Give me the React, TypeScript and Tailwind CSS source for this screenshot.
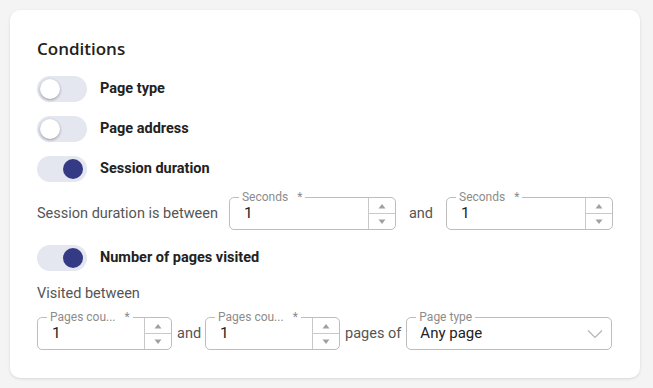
import React from 'react';

const Toggle = ({ on, label }: { on: boolean; label: string }) => (
  <div className="flex items-center h-[26px]">
    <div className="relative w-[50px] h-[26px] rounded-full bg-[#e4e6f0]">
      <div
        className={`absolute top-[3px] w-[20px] h-[20px] rounded-full ${
          on ? 'left-[26px] bg-[#353a85]' : 'left-[3px] bg-white shadow-[0_1px_3px_rgba(0,0,0,0.35)]'
        }`}
      />
    </div>
    <span className="ml-[13px] text-[14.5px] font-bold text-[#222]">{label}</span>
  </div>
);

const Stepper = () => (
  <div className="flex flex-col w-[27px] h-full border-l border-[#c9c9c9]">
    <div className="flex-1 flex items-center justify-center border-b border-[#c9c9c9]">
      <svg width="8" height="6" viewBox="0 0 8 6"><path d="M4 1L7.5 5.5H0.5Z" fill="#a0a0a0" /></svg>
    </div>
    <div className="flex-1 flex items-center justify-center">
      <svg width="8" height="6" viewBox="0 0 8 6"><path d="M4 5L7.5 0.5H0.5Z" fill="#a0a0a0" /></svg>
    </div>
  </div>
);

const NumberField = ({ label, width }: { label: string; width: string }) => (
  <div className={`relative shrink-0 h-[33px] ${width} flex items-stretch border border-[#bdbdbd] rounded-[5px]`}>
    <span className="absolute -top-[9px] left-[9px] bg-white px-[3px] text-[12px] leading-[16px] text-[#8c8c8c] whitespace-nowrap">
      {label}
      <span className="ml-[9px]">*</span>
    </span>
    <div className="flex-1 flex items-center pl-[14px] text-[15.5px] text-[#222]">1</div>
    <Stepper />
  </div>
);

export default function App() {
  return (
    <div className="min-h-[388px] bg-[#f4f4f5] p-[10px] font-['Roboto',sans-serif]">
      <div className="w-[630px] bg-white rounded-[10px] shadow-[0_1px_3px_rgba(0,0,0,0.12)] px-[27px] pt-[27px] pb-[28px]">
        <h2 className="text-[17px] leading-[24px] font-semibold text-[#222] font-['Open_Sans',sans-serif]">Conditions</h2>
        <div className="mt-[15px] flex flex-col gap-[14px]">
          <Toggle on={false} label="Page type" />
          <Toggle on={false} label="Page address" />
          <Toggle on={true} label="Session duration" />
        </div>
        <div className="mt-[15px] flex items-center whitespace-nowrap">
          <span className="text-[14.5px] text-[#555] w-[193px]">Session duration is between</span>
          <NumberField label="Seconds" width="w-[167px]" />
          <span className="text-[14.5px] text-[#555] mx-[13px]">and</span>
          <NumberField label="Seconds" width="w-[167px]" />
        </div>
        <div className="mt-[15px]">
          <Toggle on={true} label="Number of pages visited" />
        </div>
        <div className="mt-[13px] text-[14.5px] leading-[20px] text-[#555]">Visited between</div>
        <div className="mt-[13px] flex items-center whitespace-nowrap">
          <NumberField label="Pages cou..." width="w-[135px]" />
          <span className="text-[14.5px] text-[#555] ml-[5px] mr-[4px]">and</span>
          <NumberField label="Pages cou..." width="w-[135px]" />
          <span className="text-[14.5px] text-[#555] mx-[5px]">pages of</span>
          <div className="relative shrink-0 h-[33px] w-[206px] flex items-center border border-[#bdbdbd] rounded-[5px]">
            <span className="absolute -top-[9px] left-[9px] bg-white px-[3px] text-[12px] leading-[16px] text-[#8c8c8c]">Page type</span>
            <span className="flex-1 pl-[13px] text-[15px] text-[#222]">Any page</span>
            <svg className="mr-[8px]" width="16" height="10" viewBox="0 0 16 10" fill="none">
              <path d="M1 1.5L8 8.5L15 1.5" stroke="#b5b5b5" strokeWidth="1.2" />
            </svg>
          </div>
        </div>
      </div>
    </div>
  );
}
